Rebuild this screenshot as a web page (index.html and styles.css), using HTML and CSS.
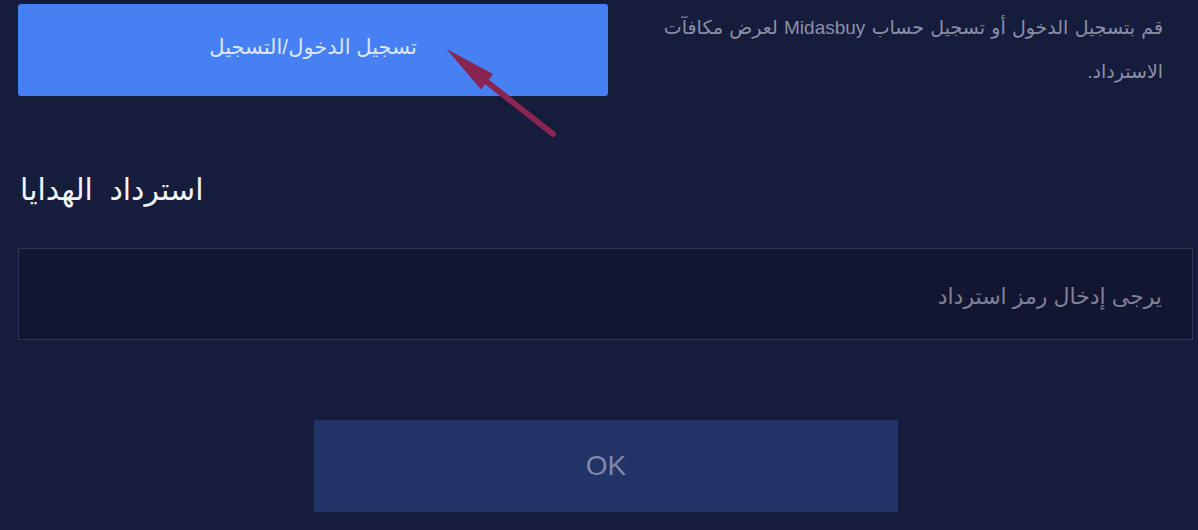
FILE: index.html
```html
<!DOCTYPE html>
<html lang="ar">
<head>
<meta charset="utf-8">
<link rel="stylesheet" href="styles.css">
</head>
<body>
<div class="page">
  <div class="top">
    <button class="login-btn">تسجيل الدخول/التسجيل</button>
    <p class="hint" dir="rtl">قم بتسجيل الدخول أو تسجيل حساب Midasbuy لعرض مكافآت الاسترداد.</p>
  </div>
  <h2 class="title">استرداد الهدايا</h2>
  <div class="field" dir="rtl">
    <input class="code-input" type="text" placeholder="يرجى إدخال رمز استرداد">
  </div>
  <div class="ok-row">
    <button class="ok-btn">OK</button>
  </div>
  <svg class="arrow" width="1198" height="530" viewBox="0 0 1198 530">
    <line x1="553" y1="134" x2="482" y2="78" stroke="#8a2552" stroke-width="6" stroke-linecap="round"/>
    <polygon points="446.5,49 493,74 481,89.5" fill="#8a2552"/>
  </svg>
</div>
</body>
</html>
```

FILE: styles.css
```css
html, body {
  margin: 0;
  padding: 0;
  background: #161c3b;
}
.page {
  position: relative;
  width: 1198px;
  height: 530px;
  overflow: hidden;
  font-family: "Liberation Sans", "DejaVu Sans", sans-serif;
}
.top {
  display: flex;
  align-items: flex-start;
  padding: 4px 0 0 18px;
}
.login-btn {
  flex: 0 0 590px;
  height: 92px;
  border: none;
  border-radius: 3px;
  background: #4680f3;
  color: #dde6fa;
  font-family: "Liberation Sans", "DejaVu Sans", sans-serif;
  font-size: 21px;
  padding: 0 0 6px;
}
.hint {
  flex: 1;
  margin: 2px 0 0;
  padding: 0 35px 0 50px;
  color: #8b90a8;
  font-size: 19px;
  line-height: 44px;
  text-align: right;
  word-spacing: 1px;
}
.title {
  margin: 78px 0 0 20px;
  color: #f2f3f8;
  font-family: "DejaVu Sans", sans-serif;
  font-weight: normal;
  font-size: 30px;
  line-height: 32px;
  word-spacing: 7px;
}
.field {
  margin: 42px 5px 0 18px;
}
.code-input {
  display: block;
  width: 100%;
  box-sizing: border-box;
  height: 92px;
  background: #121631;
  border: 1px solid #2e3451;
  padding: 6px 30px 0;
  color: #cfd3e0;
  font-family: "Liberation Sans", "DejaVu Sans", sans-serif;
  font-size: 22px;
  outline: none;
  text-align: right;
}
.code-input::placeholder {
  color: #7e8297;
}
.ok-row {
  display: flex;
  padding: 80px 0 0 314px;
}
.ok-btn {
  width: 584px;
  height: 92px;
  border: none;
  background: #223368;
  color: #7d88ab;
  font-family: "Liberation Sans", sans-serif;
  font-size: 28px;
}
.arrow {
  position: absolute;
  left: 0;
  top: 0;
  pointer-events: none;
}
```
